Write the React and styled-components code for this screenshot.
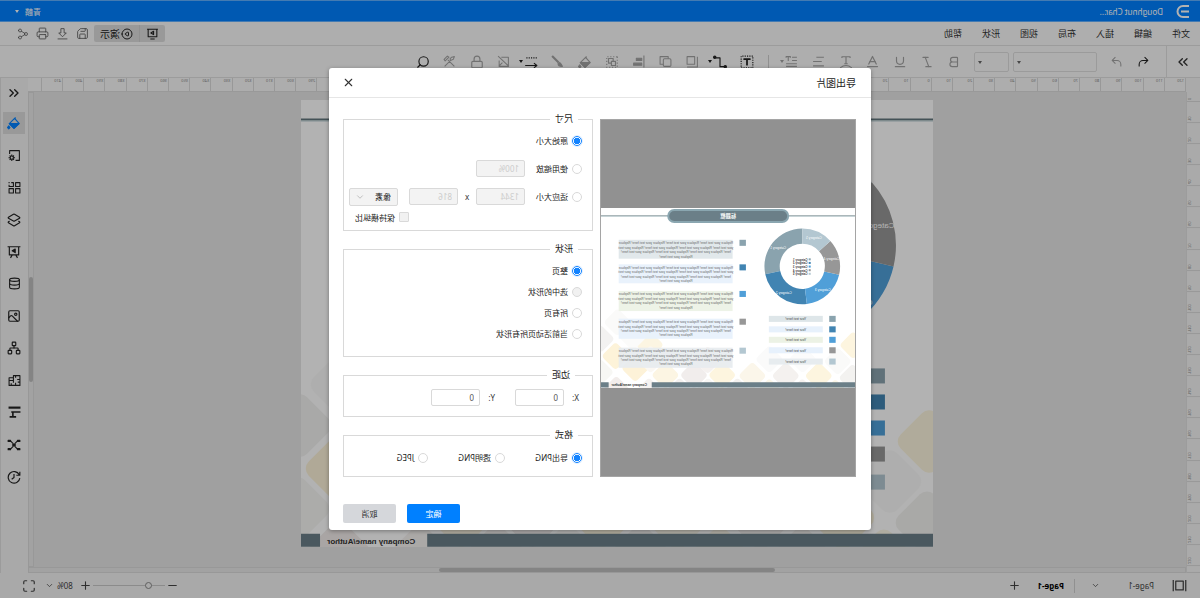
import React from 'react'
import styled, { createGlobalStyle, css } from 'styled-components'
import {
    Bold, Italic, Underline, Baseline, Lock, Search, Share2, Printer, Save,
    CirclePlay, Layers2, Database, Image, Network, Plus, Minus, Maximize,
    ChevronsLeft, ChevronsRight, ChevronDown, X
} from 'lucide-react'


const GlobalStyle = createGlobalStyle`
    * {
        box-sizing: border-box;
    }

    body {
        margin: 0;
        overflow: hidden;
        font-family: "Noto Sans", "Noto Sans CJK SC", sans-serif;
        font-size: 8px;
        color: #333;
    }

    button, input, select {
        font: inherit;
        color: inherit;
        margin: 0;
        padding: 0;
    }
`;

/* the whole editor is shown flipped */
const Shell = styled.div`
    position: relative;
    display: flex;
    flex-flow: column nowrap;
    height: 100vh;
    transform: scaleX(-1);
    background-color: #fafafa;
`;

const Header = styled.header`
    display: flex;
    align-items: center;
    gap: 12px;
    height: 22px;
    padding: 0 15px 0 11px;
    background-color: #0080ff;
    border-top: 1px solid #62b0ff;
    border-bottom: 1px solid #62b0ff;
    color: #fff;

    .user {
        display: flex;
        align-items: center;
        gap: 6px;
        margin-left: auto;
    }
`;

const PlainButton = styled.button`
    display: flex;
    align-items: center;
    justify-content: center;
    background: none;
    border: none;
    cursor: pointer;
`;

const MenuBar = styled.nav`
    display: flex;
    align-items: center;
    height: 24px;
    padding: 0 14px 0 10px;
    border-bottom: 1px solid #e0e0e0;
    font-size: 9px;

    .menus {
        display: flex;
        gap: 20px;
        flex: 1;
    }

    .actions {
        display: flex;
        align-items: center;
        gap: 2px;
        color: #555;
    }

    .actions > button {
        width: 18px;
    }
`;

const PlayGroup = styled.div`
    display: flex;
    height: 17px;
    border-radius: 2px;
    background-color: #dcdcdc;
    color: #222;
    font-size: 10px;

    button {
        padding: 0 6px;
        gap: 1px;
    }

    button + button {
        border-left: 1px solid #cfcfcf;
    }
`;

const Toolbar = styled.div`
    display: flex;
    align-items: center;
    height: 32px;
    border-bottom: 1px solid #e0e0e0;
`;

const CollapseCell = styled.div`
    display: flex;
    align-items: center;
    justify-content: center;
    width: 34px;
    height: 100%;
    margin-right: 13px;
    border-right: 1px solid #e0e0e0;
`;

const ToolGroup = styled.div`
    display: flex;
    align-items: center;
    gap: 9px;
    margin-left: ${props => props.$gap || 0}px;
`;

const Tool = styled(PlainButton)`
    position: relative;
    width: 18px;
    height: 18px;
    color: ${props => props.$on ? '#222' : '#a3a3a3'};

    .caret {
        position: absolute;
        left: 17px;
        top: 7px;
    }
`;

const Caret = styled.span`
    width: 0;
    height: 0;
    border: 2px solid transparent;
    border-top: 3px solid currentColor;
    border-bottom: none;
`;

const FontBox = styled.label`
    position: relative;
    display: block;
    width: ${props => props.$width}px;
    height: 20px;
    margin-right: 4px;

    select {
        appearance: none;
        width: 100%;
        height: 100%;
        border: 1px solid #dedede;
        border-radius: 2px;
        background: none;
    }

    span {
        position: absolute;
        right: 4px;
        top: 9px;
        color: #666;
    }
`;

const Divider = styled.span`
    width: 1px;
    height: 13px;
    background-color: #cfcfcf;
`;

const Workspace = styled.div`
    display: flex;
    flex: 1;
    min-height: 0;
`;

const Stage = styled.div`
    display: flex;
    flex-flow: column nowrap;
    flex: 1;
    min-width: 0;
    background-color: #f4f4f4;
`;

const StageRow = styled.div`
    display: flex;
    flex: 1;
    min-height: 0;
`;

const TopRuler = styled.div`
    display: flex;
    height: 14px;
    margin-left: 14px;
    background-color: #f8f8f8;
    border-bottom: 1px solid #dcdcdc;
`;

const SideRuler = styled.div`
    display: flex;
    flex-flow: column nowrap;
    width: 14px;
    background-color: #f4f4f4;
    border-right: 1px solid #e0e0e0;
`;

const Tick = styled.span`
    flex: ${props => props.$grow} 1 0;
    min-width: 0;
    min-height: 0;
    overflow: hidden;
    font-size: 4px;
    line-height: 5px;
    color: #888;

    ${props => props.$side ? css`
        writing-mode: vertical-rl;
        transform: rotate(180deg);
        border-top: 1px solid #dadada;
        padding: 1px 8px 0 0;
    ` : css`
        border-left: 1px solid #dadada;
        padding-left: 1px;
    `}
`;

const Canvas = styled.main`
    display: flex;
    justify-content: center;
    align-items: flex-start;
    flex: 1;
    min-width: 0;
    overflow: hidden;
    padding: 8px 14px 0 0;
    background-color: #e5e5e5;
`;

const Sheet = styled.div`
    flex: 0 1 632px;
    background-color: #fff;

    svg {
        display: block;
        width: 100%;
    }
`;

const Scroll = styled.div`
    display: flex;
    justify-content: center;
    background-color: #e8e8e8;
    border: 1px solid #dadada;

    &::after {
        content: '';
        border-radius: 3px;
        background-color: #bdbdbd;
    }

    ${props => props.$vertical ? css`
        flex-flow: column nowrap;
        width: 6px;
        &::after { height: 22%; }
    ` : css`
        height: 6px;
        &::after { width: 29%; }
    `}
`;

const Sidebar = styled.aside`
    display: flex;
    flex-flow: column nowrap;
    width: 28px;
    background-color: #f2f2f2;
    border-right: 1px solid #dedede;
`;

const SideCell = styled.div`
    display: flex;
    align-items: center;
    justify-content: center;
    flex: 0 0 6.5%;
    min-height: 0;

    &:first-child {
        flex-basis: 29px;
    }

    button {
        width: 22px;
        height: 22px;
        color: ${props => props.$active ? '#0080ff' : '#222'};
        background-color: ${props => props.$active ? '#dcdcdc' : 'transparent'};
    }
`;

const StatusBar = styled.footer`
    display: flex;
    align-items: center;
    justify-content: space-between;
    height: 25px;
    padding: 0 22px 0 13px;
    background-color: #f2f2f2;
    color: #444;

    div {
        display: flex;
        align-items: center;
        gap: 8px;
    }

    .page {
        gap: 28px;
        margin-left: 10px;
    }

    .current {
        margin: 0 8px 0 2px;
        color: #000;
        font-weight: 700;
    }

    .split {
        height: 14px;
        margin-left: 8px;
    }

    .zoom {
        gap: 1px;
    }

    .percent {
        gap: 3px;
        margin: 0 8px 0 5px;
    }
`;

const ZoomRange = styled.input`
    appearance: none;
    width: 72px;
    height: 8px;
    background: none;

    &::-webkit-slider-runnable-track {
        height: 1px;
        background-color: #c8c8c8;
    }

    &::-webkit-slider-thumb {
        appearance: none;
        width: 7px;
        height: 7px;
        margin-top: -3px;
        border: 1px solid #888;
        border-radius: 50%;
        background-color: #f2f2f2;
    }
`;

const Overlay = styled.div`
    position: absolute;
    inset: 0;
    display: flex;
    align-items: center;
    justify-content: center;
    background-color: rgba(0, 0, 0, .3);
`;

const Dialog = styled.section`
    width: 542px;
    border-radius: 3px;
    background-color: #fff;
    box-shadow: 0 1px 4px rgba(0, 0, 0, .35);
`;

const DialogHead = styled.div`
    display: flex;
    align-items: center;
    justify-content: space-between;
    height: 30px;
    padding: 0 13px 0 15px;
    border-bottom: 1px solid #e6e6e6;

    h2 {
        margin: 0;
        font-size: 10px;
        font-weight: 400;
        color: #222;
    }
`;

const DialogBody = styled.div`
    display: flex;
    gap: 7px;
    padding: 15px 14px 27px 15px;
`;

const Preview = styled.div`
    display: flex;
    align-items: center;
    flex: 1;
    margin-top: 6px;
    border: 1px solid #a5a5a5;
    background-color: #919191;

    svg {
        display: block;
        width: 100%;
        background-color: #fff;
    }
`;

const Options = styled.form`
    display: flex;
    flex-flow: column nowrap;
    gap: 12px;
    width: 250px;
`;

const Group = styled.fieldset`
    display: flex;
    flex-flow: column nowrap;
    gap: ${props => props.$gap || 0}px;
    min-width: 0;
    margin: 0;
    padding: ${props => props.$pad};
    border: 1px solid #d9d9d9;

    legend {
        margin-left: 4px;
        padding: 0 5px;
        font-size: 9px;
        line-height: 12px;
        color: #222;
    }
`;

const Row = styled.div`
    display: flex;
    align-items: center;
    height: ${props => props.$height || 17}px;
    padding-left: ${props => props.$indent || 0}px;

    .times {
        width: 18px;
        text-align: center;
    }
`;

const Choice = styled.label`
    display: flex;
    align-items: center;
    gap: 4px;
    width: ${props => props.$width ? props.$width + 'px' : 'auto'};
    color: #222;
    white-space: nowrap;

    input {
        appearance: none;
        width: 10px;
        height: 10px;
        border: 1px solid #d9d9d9;
        border-radius: 50%;
        background-color: #fff;
    }

    input[type='checkbox'] {
        border-radius: 1px;
    }

    input:disabled {
        background-color: #f1f1f1;
    }

    input:checked {
        border-color: #1283ff;
        background: radial-gradient(circle, #1283ff 0 3px, #fff 3px);
        box-shadow: 0 0 0 1px #e3f0ff;
    }
`;

const TextBox = styled.input`
    width: 49px;
    height: 17px;
    padding: 0 5px;
    border: 1px solid #d9d9d9;
    border-radius: 2px;
    background-color: #fff;
    color: #555;

    &:disabled {
        background-color: #f3f3f3;
        color: #ccc;
    }
`;

const UnitBox = styled.div`
    position: relative;
    width: 49px;
    height: 18px;
    margin-left: 11px;

    select {
        appearance: none;
        width: 100%;
        height: 100%;
        padding: 0 6px;
        border: 1px solid #d9d9d9;
        border-radius: 2px;
        background-color: #f3f3f3;
        color: #222;
        opacity: 1;
    }

    svg {
        position: absolute;
        right: 6px;
        top: 4px;
        color: #b5b5b5;
    }
`;

const Field = styled.label`
    display: flex;
    align-items: center;
    width: 84px;

    span {
        width: 15px;
    }
`;

const DialogFoot = styled.div`
    display: flex;
    justify-content: flex-end;
    gap: 11px;
    padding: 0 14px 7px;
`;

const ActionButton = styled.button`
    width: 53px;
    height: 19px;
    border: none;
    border-radius: 2px;
    background-color: ${props => props.$primary ? '#0080ff' : '#d5d7db'};
    color: ${props => props.$primary ? '#fff' : '#333'};
    cursor: pointer;
`;


const GLYPHS = {
    download: <path d="M9 3h6v8h4l-7 7-7-7h4zM3 22h18" strokeWidth="1.500" />,
    screen: <path d="M2 4h20M4 4v14h16V4M8 22h8M10 8l5 3-5 3z" />,
    undo: <path d="M10 4 4 10l6 6M4 10h9a7 7 0 0 1 7 7v4" />,
    redo: <path d="m14 4 6 6-6 6M20 10h-9a7 7 0 0 0-7 7v4" />,
    textArc: <path d="M5 5V3h14v2M12 3v12M9 15h6M2 22q10-8 20 0" />,
    lines: <path d="M2 4h14M6 12h16M2 20h20" />,
    textLines: <path d="M2 4h9M2 10h9M2 16h20M2 21h20M14 5V3h8v2M18 3v8" />,
    textBox: <><path d="M2 2h20v20H2z" strokeDasharray="2 2" /><path d="M7 8V7h10v1M12 7v11" strokeWidth="3" /></>,
    connector: <><path d="M5 20h7V5h7" /><circle cx="3" cy="20" r="2" fill="currentColor" /><circle cx="21" cy="4" r="2" fill="currentColor" /></>,
    shadow: <path d="M7 3h14v14H7zM2 3v19h19" transform="translate(1 0)" />,
    copy: <><rect x="2" y="7" width="14" height="14" rx="2" /><path d="M7 7V3h15v14h-6" /></>,
    align: <><path d="M2 1v22" /><path d="M6 6h10v4H6zM6 15h15v4H6z" fill="currentColor" /></>,
    group: <><path d="M3 3h18v18H3z" strokeDasharray="2 3" /><path d="M6 11h7v7H6zM10 11V6h8v8h-5" /></>,
    bucket: <><path d="M10 2v4M11 4l9 9-8 8-9-8z" /><path d="M4 13h16l-8 8zM21 17l2 3-2 2-2-2z" fill="currentColor" /></>,
    brush: <><path d="M22 2 10 14" strokeWidth="4" /><path d="M9 14c-3 0-4 3-6 7 4 0 8-1 8-5z" fill="currentColor" /></>,
    arrowLine: <><path d="M2 5h20" strokeDasharray="2 2" /><path d="M22 18H3M7 14l-5 4 5 4" /></>,
    edit: <path d="M20 10v11H3V4h13M2 21 22 2M8 4H3v6M14 14l6 6" />,
    tools: <path d="M3 21 15 9M13 4l7 7 2-3-6-6zM21 21 9 9M3 3l2 5 5 2 1-3-3-3z" />,
    pageGear: <><path d="M10 21H3V3h18v6" /><circle cx="17" cy="16" r="3" /><path d="M17 10v3M17 19v3M11 16h3M20 16h3M13 12l2 2M19 18l2 2M21 12l-2 2M15 18l-2 2" /></>,
    grid: <path d="M2 3h8v7H2zM2 14h8v8H2zM14 14h8v8h-8zM18 3h-4v7h8V7M21 3h2" />,
    board: <><path d="M1 3h22M4 3v14h16V3M9 17l-3 5M15 17l3 5" /><path d="m10 7 5 3-5 3z" fill="currentColor" /></>,
    plan: <path d="M2 3h12v4h8v14H2zM2 10h5M10 3v4M2 15h4M10 21v-5M14 12h8M14 7v9M18 21v-4" />,
    gantt: <><path d="M1 3h22" strokeWidth="4" /><path d="M1 11h17M15 11v9M9 20h12" strokeWidth="3" /></>,
    nodes: <><path d="M6 5l5 5M18 5l-5 5M6 19l5-5M18 19l-5-5" /><path d="M2 4h4v2H2zM18 4h4v2h-4zM2 18h4v2H2zM18 18h4v2h-4zM10 11h4v2h-4z" fill="currentColor" /></>,
    history: <path d="M3 8a10 10 0 1 1-1 6M2 3v6h6M12 7v6l4 3" />,
    pages: <path d="M2 3v18M22 3v18M6 5h12v14H6z" />,
};

function Glyph({ name, size = 13 }) {
    return (
        <svg width={size} height={size} viewBox="0 0 24 24" fill="none" stroke="currentColor"
            strokeWidth="2" strokeLinejoin="round" aria-hidden="true">
            {GLYPHS[name]}
        </svg>
    )
}

const MENUS = ['文件', '编辑', '插入', '布局', '视图', '形状', '帮助'];

const SIDE_ICONS = [
    <ChevronsLeft size={16} />,
    <Glyph name="bucket" size={14} />,
    <Glyph name="pageGear" />,
    <Glyph name="grid" />,
    <Layers2 size={14} />,
    <Glyph name="board" size={14} />,
    <Database size={13} />,
    <Image size={14} />,
    <Network size={14} />,
    <Glyph name="plan" />,
    <Glyph name="gantt" />,
    <Glyph name="nodes" size={14} />,
    <Glyph name="history" size={14} />,
];

const COLORS = ['#8aa3ae', '#4184b2', '#509fd8', '#979797', '#b3c7d1'];
const TINTS = ['#dee6e9', '#e7f1fc', '#ecf2e5', '#e7f1fc', '#e7ecef'];

const DIAMONDS = [
    [4, 341, '#fdf5df'], [43, 381, '#fafaf9'], [6, 422, '#f3f2f0'], [90, 417, '#fdf5df'],
    [49, 460, '#fbf6e6'], [131, 458, '#f5f2f0'], [172, 417, '#f4f1ef'], [130, 376, '#fbfbfb'],
    [213, 458, '#fcf7e8'], [255, 417, '#fbf6ea'], [213, 376, '#fafafa'], [330, 415, '#fdf5df'],
    [292, 456, '#f3f1ef'], [400, 415, '#f1edec'], [366, 378, '#f5f1ef'], [365, 456, '#f8f7f5'],
    [471, 415, '#fcf5e3'], [436, 456, '#f4f1ef'], [510, 340, '#fcf5e2'], [512, 456, '#f5f2f0'],
    [546, 398, '#fdf2d8'], [508, 376, '#fbf8f3'], [590, 284, '#fafaf9'], [632, 325, '#f3f2f1'],
    [595, 368, '#fdf3d9'], [634, 408, '#f7f7f4'], [593, 452, '#f2edeb'], [552, 320, '#fbfbfa'],
];

const SEGMENTS = [
    [0, 102, COLORS[0]],
    [102, 187, COLORS[1]],
    [187, 257, COLORS[2]],
    [257, 312, COLORS[3]],
    [312, 360, COLORS[4]],
];

const SEGMENT_LABELS = [
    [191, 101, 'Category 1'], [177, 213, 'Category 2'], [80, 205, 'Category 3'],
    [58, 128, 'Category 4'], [102, 77, 'Category 5'],
];

const R = 'Replace your text here!';
const PARAGRAPH = [
    `${R} ${R} ${R} Replace`,
    `your text here! ${R} ${R} Replace your text`,
    `here! ${R} ${R} ${R}`,
    R,
];

// slices of the ring are counted clockwise from the top
function ringPath(from, to) {
    // the first slices lie on the right, next to the paragraphs
    const at = (deg, r) => {
        const a = (deg - 90) * Math.PI / 180;
        return `${131 + r * Math.cos(a)} ${145 + r * Math.sin(a)}`;
    };
    return `M${at(from, 94)}A94 94 0 0 1 ${at(to, 94)}L${at(to, 56)}A56 56 0 0 0 ${at(from, 56)}z`;
}

function Diagram() {
    return (
        <svg viewBox="0 0 631 446" fontFamily='"Liberation Sans", "Noto Sans CJK SC", sans-serif'>
            {DIAMONDS.map(([x, y, fill]) => (
                <rect key={`${x}-${y}`} x={x - 25} y={y - 25} width="50" height="50" rx="10"
                    fill={fill} transform={`rotate(45 ${x} ${y})`} />
            ))}
            <path d="M0 19.5h631" stroke="#62767d" strokeWidth="2" />
            <path d="M0 21h631" stroke="#b7cdd2" strokeWidth="1" />
            <rect x="166" y="5" width="298" height="30" rx="15" fill="#6b7f88" stroke="#8aa6b0" strokeWidth="5" />
            <text x="315" y="25" fontSize="13" fontWeight="700" fill="#fff" textAnchor="middle">标题框</text>

            {SEGMENTS.map(([from, to, fill]) => (
                <path key={from} d={ringPath(from, to)} fill={fill} />
            ))}
            {SEGMENT_LABELS.map(([x, y, label]) => (
                <text key={label} x={x} y={y} fontSize="8" fill="#fff" textAnchor="middle">{label}</text>
            ))}
            {COLORS.map((color, i) => (
                <g key={color}>
                    <rect x="110" y={125 + i * 9} width="5" height="5" fill={color} />
                    <text x="118" y={131 + i * 9} fontSize="7" fontWeight="700" fill="#333">Category {i + 1}</text>
                </g>
            ))}

            {[268, 294, 320, 346, 374].map((y, i) => (
                <g key={y}>
                    <rect x="48" y={y} width="16" height="15" fill={COLORS[i]} />
                    <rect x="80" y={y} width="134" height="15" fill={TINTS[i]} />
                    <text x="147" y={y + 11} fontSize="8" fill="#444" textAnchor="middle">Your text here!</text>
                </g>
            ))}

            {[79, 140, 206, 275, 347].map((y, i) => (
                <g key={y}>
                    <rect x="271" y={y} width="16" height="15" fill={COLORS[i]} />
                    <rect x="304" y={y} width="283" height={i < 2 ? 47 : 50} fill={TINTS[i]} fillOpacity=".92" />
                    {PARAGRAPH.map((line, n) => (
                        <text key={n} x="445" y={y + 11 + n * 11} fontSize="8" fill="#666" textAnchor="middle">{line}</text>
                    ))}
                </g>
            ))}

            <path d="M0 433h505v13H0zM612 433h19v13h-19z" fill="#6b7f88" />
            <text x="517" y="443" fontSize="8" fontWeight="700" fill="#333">Company name/Author</text>
        </svg>
    )
}

function range(from, to) {
    return Array.from({ length: to - from + 1 }, (_, i) => from + i);
}

export default function App() {
    return (
        <>
            <GlobalStyle />
            <Shell>
                <Header>
                    <svg width="14" height="15" viewBox="0 0 14 15" fill="none" stroke="#fff" strokeWidth="2">
                        <path d="M0 2h6a5.5 5.5 0 0 1 0 11H0M0 7.500h8" />
                    </svg>
                    <span>Doughnut Char...</span>
                    <PlainButton className="user">青麟 <Caret /></PlainButton>
                </Header>
                <MenuBar>
                    <div className="menus">
                        {MENUS.map(menu => <PlainButton key={menu}>{menu}</PlainButton>)}
                    </div>
                    <div className="actions">
                        <PlayGroup>
                            <PlainButton aria-label="Slides"><Glyph name="screen" /></PlainButton>
                            <PlainButton><CirclePlay size={12} />演示</PlainButton>
                        </PlayGroup>
                        <PlainButton aria-label="Save"><Save size={13} strokeWidth={1.5} /></PlainButton>
                        <PlainButton aria-label="Download"><Glyph name="download" /></PlainButton>
                        <PlainButton aria-label="Print"><Printer size={13} strokeWidth={1.5} /></PlainButton>
                        <PlainButton aria-label="Share"><Share2 size={12} strokeWidth={1.5} /></PlainButton>
                    </div>
                </MenuBar>
                <Toolbar>
                    <CollapseCell>
                        <PlainButton aria-label="Expand"><ChevronsRight size={16} /></PlainButton>
                    </CollapseCell>
                    <ToolGroup>
                        <Tool $on aria-label="Undo"><Glyph name="undo" /></Tool>
                        <Tool aria-label="Redo"><Glyph name="redo" /></Tool>
                    </ToolGroup>
                    <ToolGroup $gap={11}>
                        <FontBox $width={84}><select aria-label="Font" /><Caret /></FontBox>
                    </ToolGroup>
                    <FontBox $width={35}><select aria-label="Font size" /><Caret /></FontBox>
                    <ToolGroup $gap={7}>
                        <Tool aria-label="Bold"><Bold size={14} /></Tool>
                        <Tool aria-label="Italic"><Italic size={14} /></Tool>
                        <Tool aria-label="Underline"><Underline size={14} /></Tool>
                        <Tool aria-label="Text color"><Baseline size={15} /></Tool>
                        <Tool aria-label="Text effect"><Glyph name="textArc" size={14} /></Tool>
                        <Tool aria-label="Alignment"><Glyph name="lines" /></Tool>
                        <Tool aria-label="Line spacing"><Glyph name="textLines" /><Caret className="caret" /></Tool>
                    </ToolGroup>
                    <ToolGroup $gap={14}>
                        <Divider />
                        <span />
                    </ToolGroup>
                    <ToolGroup $gap={3}>
                        <Tool $on aria-label="Text box"><Glyph name="textBox" size={14} /></Tool>
                        <Tool $on aria-label="Connector"><Glyph name="connector" size={14} /><Caret className="caret" /></Tool>
                        <Tool aria-label="Shadow"><Glyph name="shadow" /></Tool>
                        <Tool aria-label="Duplicate"><Glyph name="copy" /></Tool>
                        <Tool aria-label="Align"><Glyph name="align" /></Tool>
                        <Tool aria-label="Group"><Glyph name="group" size={14} /></Tool>
                        <Tool aria-label="Fill"><Glyph name="bucket" size={14} /></Tool>
                        <Tool aria-label="Brush"><Glyph name="brush" /></Tool>
                        <Tool $on aria-label="Line style"><Glyph name="arrowLine" size={14} /><Caret className="caret" /></Tool>
                        <Tool aria-label="Edit shape"><Glyph name="edit" /></Tool>
                        <Tool aria-label="Lock"><Lock size={14} /></Tool>
                        <Tool aria-label="Tools"><Glyph name="tools" /></Tool>
                        <Tool $on aria-label="Search"><Search size={14} /></Tool>
                    </ToolGroup>
                </Toolbar>
                <Workspace>
                    <Stage>
                        <TopRuler>
                            {range(-12, 41).map(k => <Tick key={k} $grow={1}>{Math.abs(k * 10)}</Tick>)}
                            <Tick $grow={0.6} />
                        </TopRuler>
                        <StageRow>
                            <SideRuler>
                                <Tick $side $grow={0.42}>0</Tick>
                                {range(1, 22).map(k => <Tick key={k} $side $grow={1}>{k * 10}</Tick>)}
                                <Tick $side $grow={0.26} />
                            </SideRuler>
                            <Stage>
                                <StageRow>
                                    <Canvas>
                                        <Sheet><Diagram /></Sheet>
                                    </Canvas>
                                    <Scroll $vertical />
                                </StageRow>
                                <Scroll />
                            </Stage>
                        </StageRow>
                    </Stage>
                    <Sidebar>
                        {SIDE_ICONS.map((icon, i) => (
                            <SideCell key={i} $active={i === 1}>
                                <PlainButton aria-label={`Panel ${i + 1}`}>{icon}</PlainButton>
                            </SideCell>
                        ))}
                    </Sidebar>
                </Workspace>
                <StatusBar>
                    <div>
                        <Glyph name="pages" size={15} />
                        <PlainButton className="page">Page-1 <ChevronDown size={9} /></PlainButton>
                        <Divider className="split" />
                        <PlainButton className="current">Page-1</PlainButton>
                        <PlainButton aria-label="Add page"><Plus size={13} /></PlainButton>
                    </div>
                    <div className="zoom">
                        <PlainButton aria-label="Zoom out"><Minus size={13} /></PlainButton>
                        <ZoomRange type="range" aria-label="Zoom" min="0" max="100" defaultValue="20" />
                        <PlainButton aria-label="Zoom in"><Plus size={13} /></PlainButton>
                        <PlainButton className="percent">80% <ChevronDown size={9} /></PlainButton>
                        <PlainButton aria-label="Full screen"><Maximize size={14} /></PlainButton>
                    </div>
                </StatusBar>
                <Overlay>
                    <Dialog role="dialog" aria-labelledby="export-title">
                        <DialogHead>
                            <h2 id="export-title">导出图片</h2>
                            <PlainButton aria-label="Close"><X size={13} strokeWidth={2} /></PlainButton>
                        </DialogHead>
                        <DialogBody>
                            <Preview><Diagram /></Preview>
                            <Options>
                                <Group $gap={11} $pad="7px 5px 1px 10px">
                                    <legend>尺寸</legend>
                                    <Row>
                                        <Choice><input type="radio" name="size" defaultChecked />原始大小</Choice>
                                    </Row>
                                    <Row>
                                        <Choice $width={57}><input type="radio" name="size" />使用缩放</Choice>
                                        <TextBox aria-label="Scale" defaultValue="100%" disabled />
                                    </Row>
                                    <div>
                                        <Row>
                                            <Choice $width={57}><input type="radio" name="size" />适应大小</Choice>
                                            <TextBox aria-label="Width" defaultValue="1344" disabled />
                                            <span className="times">x</span>
                                            <TextBox aria-label="Height" defaultValue="816" disabled />
                                            <UnitBox>
                                                <select aria-label="Unit" disabled><option>像素</option></select>
                                                <ChevronDown size={10} />
                                            </UnitBox>
                                        </Row>
                                        <Row $height={24} $indent={173}>
                                            <Choice><input type="checkbox" disabled />保持横纵比</Choice>
                                        </Row>
                                    </div>
                                </Group>
                                <Group $gap={4} $pad="7px 5px 14px 10px">
                                    <legend>形状</legend>
                                    <Row><Choice><input type="radio" name="shape" defaultChecked />整页</Choice></Row>
                                    <Row><Choice><input type="radio" name="shape" disabled />选中的形状</Choice></Row>
                                    <Row><Choice><input type="radio" name="shape" />所有页</Choice></Row>
                                    <Row><Choice><input type="radio" name="shape" />当前活动页所有形状</Choice></Row>
                                </Group>
                                <Group $pad="8px 5px 10px 13px">
                                    <legend>边距</legend>
                                    <Row>
                                        <Field><span>X:</span><TextBox defaultValue="0" /></Field>
                                        <Field><span>Y:</span><TextBox defaultValue="0" /></Field>
                                    </Row>
                                </Group>
                                <Group $pad="8px 5px 10px 10px">
                                    <legend>格式</legend>
                                    <Row>
                                        <Choice $width={77}><input type="radio" name="format" defaultChecked />导出PNG</Choice>
                                        <Choice $width={77}><input type="radio" name="format" />透明PNG</Choice>
                                        <Choice $width={77}><input type="radio" name="format" />JPEG</Choice>
                                    </Row>
                                </Group>
                            </Options>
                        </DialogBody>
                        <DialogFoot>
                            <ActionButton $primary>确定</ActionButton>
                            <ActionButton>取消</ActionButton>
                        </DialogFoot>
                    </Dialog>
                </Overlay>
            </Shell>
        </>
    )
}
